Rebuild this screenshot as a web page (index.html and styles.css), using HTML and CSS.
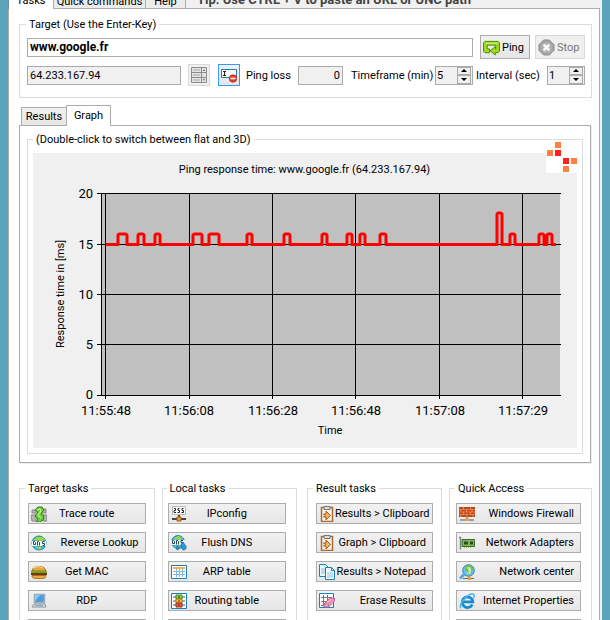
FILE: index.html
```html
<!DOCTYPE html>
<html lang="en">
<head>
<meta charset="utf-8">
<title>Ping response time</title>
<link rel="stylesheet" href="styles.css">
</head>
<body>
<main class="window">
  <nav class="main-tabs">
    <button class="main-tab selected">Tasks</button>
    <button class="main-tab">Quick commands</button>
    <button class="main-tab">Help</button>
    <strong class="tip">Tip: Use CTRL + V to paste an URL or UNC path</strong>
  </nav>
  <div class="page">
    <fieldset class="group target">
      <legend>Target (Use the Enter-Key)</legend>
      <div class="host-row">
        <input class="box host" type="text" value="www.google.fr" aria-label="Target">
        <button class="button action">
          <svg class="icon large" viewBox="0 0 18 18"><path d="M2 2.500h14l1.500 1.500v9L16 14.500h-3V17l-5.500-4.500L13 8v2.500h.500V6.500h-9v4H7v4H2L.5 13V4z" fill="#9fd821" stroke="#4c860d" stroke-linejoin="round"/><path d="M2.500 4.500h13" stroke="#d8f58a"/></svg>
          Ping</button>
        <button class="button action" disabled>
          <svg class="icon large" viewBox="0 0 18 18"><path d="M6 1h6l5 5v6l-5 5H6l-5-5V6z" fill="#a4a4a4" stroke="#8d8d8d"/><circle cx="9" cy="9" r="5.500" fill="#b4b4b4"/><path d="M6 6l6 6M12 6l-6 6" stroke="#fff" stroke-width="2.500"/></svg>
          Stop</button>
      </div>
      <div class="options-row">
        <input class="box address" type="text" value="64.233.167.94" readonly aria-label="IP address">
        <button class="button square" disabled aria-label="Address list">
          <svg class="icon" viewBox="0 0 16 16"><path d="M.5.5h15v15H.5zM.5 5.500h15M.5 10.500h15M10.500.5v15" fill="#e4e4e4" stroke="#8b8b8b"/><path d="M2 3h7M2 8h7M2 13h7" stroke="#a8a8a8"/><path d="M12 4l1-2 1 2zM12 12l1 2 1-2z" fill="#666"/></svg>
        </button>
        <button class="button square checked" aria-label="Clear input">
          <svg class="icon" viewBox="0 0 16 16"><path d="M.5 2.500h15v8H.5z" fill="#fff" stroke="#1680bf"/><path d="M2 4.500h3M3.500 4.500v4M2 8.500h3" stroke="#222" fill="none"/><circle cx="12" cy="11.500" r="3.800" fill="#e23a25" stroke="#b92515" stroke-width=".6"/><path d="M9.500 11.500h5" stroke="#fff" stroke-width="1.600"/></svg>
        </button>
        <label for="loss">Ping loss</label>
        <input class="box loss" id="loss" type="text" value="0" readonly>
        <label for="frame">Timeframe (min)</label>
        <span class="spinner"><input id="frame" type="text" value="5"><span class="steps"><button aria-label="More minutes"><i class="up"></i></button><button aria-label="Fewer minutes"><i class="down"></i></button></span></span>
        <label for="interval">Interval (sec)</label>
        <span class="spinner"><input id="interval" type="text" value="1"><span class="steps"><button aria-label="More seconds"><i class="up"></i></button><button aria-label="Fewer seconds"><i class="down"></i></button></span></span>
      </div>
    </fieldset>

    <nav class="view-tabs">
      <button class="view-tab">Results</button>
      <button class="view-tab selected">Graph</button>
    </nav>
    <section class="pane">
      <fieldset class="group graph">
        <legend>(Double-click to switch between flat and 3D)</legend>
        <svg class="chart" viewBox="33 153 544 295" role="img" aria-label="Ping response time">
          <path d="M102 194h458v201H102z" fill="#c0c0c0"/>
          <path class="grid" d="M97 193.500h464M97 244.500h464M97 294.500h464M97 344.500h464M97 395.500h464M101.500 193v203M105.500 193v206M189.500 193v206M272.500 193v206M355.500 193v206M439.500 193v206M522.500 193v206"/>
          <path class="series" d="M106 244.500H118V235l1-1h7l1 1v9.500H138V235l1-1h4l1 1v9.500H155V235l1-1h3l1 1v9.500H193V235l1-1h7l1 1v9.500H209V235l1-1h8l1 1v9.500H247V235l1-1h3l1 1v9.500H284V235l1-1h4l1 1v9.500H322V235l1-1h3l1 1v9.500H347V235l1-1h3l1 1v9.500H360V235l1-1h3l1 1v9.500H380V235l1-1h4l1 1v9.500H497V214l1-1h3l1 1v30.500H510V235l1-1h3l1 1v9.500H539V235l1-1h3l1 1v9.500H547V235l1-1h3l1 1v9.500H556"/>
          <g class="caption">
            <text x="304.500" y="173">Ping response time: www.google.fr (64.233.167.94)</text>
            <text x="330" y="434">Time</text>
            <text x="-294" y="64" transform="rotate(-90)">Response time in [ms]</text>
          </g>
          <g class="scale values">
            <text x="93" y="198">20</text><text x="93" y="249">15</text><text x="93" y="299">10</text><text x="93" y="349">5</text><text x="93" y="399">0</text>
          </g>
          <g class="scale times">
            <text x="106" y="415">11:55:48</text><text x="189" y="415">11:56:08</text><text x="273" y="415">11:56:28</text><text x="356" y="415">11:56:48</text><text x="440" y="415">11:57:08</text><text x="523" y="415">11:57:29</text>
          </g>
        </svg>
        <svg class="badge" viewBox="0 0 31 31"><path fill="#fff" d="M0 0h31v31H0z"/><path fill="#ff8040" d="M9 0h6v6H9zM1 8h6v6H1zM25 16h6v6h-6zM17 24h6v6h-6z"/><path fill="#ff2020" d="M9 8h6v6H9zM17 16h6v6h-6z"/></svg>
      </fieldset>
    </section>

    <div class="tasks">
      <div class="pair">
        <fieldset class="group task">
          <legend>Target tasks</legend>
          <button class="button"><svg class="icon" viewBox="0 0 16 16"><path d="M1 4h4v3H1zM0 9h5v6H1zM11 3h4v4h-4zM11 9h5v6h-4z" fill="#b5b5b5" stroke="#888"/><path d="M4 4l3-3h4l2 3-3 4 3 2-1 4-3 2H5l2-3-3-3 3-4z" fill="#6ed13b" stroke="#288018"/><path d="M6 4l3-1 1 2-3 4 3 3" stroke="#d5f7a0" fill="none"/></svg><span>Trace route</span></button>
          <button class="button right"><svg class="icon" viewBox="0 0 16 16"><circle cx="8" cy="8" r="7" fill="#45ade0" stroke="#1686bf"/><path d="M2 5l4-3 6 0 2 3-3 1zM4 12l7 0-2 3z" fill="#9cd63b"/><path d="M1 6h14v5H1z" fill="#e9f7fb"/><path d="M2.500 6.500h1l1 1v2h-2zM6.500 10.500v-4h1l1 1v3M13.500 6.500h-2v2h2v2h-2" stroke="#234a62" fill="none"/></svg><span>Reverse Lookup</span></button>
          <button class="button"><svg class="icon" viewBox="0 0 16 16"><path d="M1 7c0-6 14-6 14 0z" fill="#e8a53a" stroke="#ad6b17"/><path d="M3 4q5-3 9 0" stroke="#ffe09a" fill="none"/><path d="M0 8h16" stroke="#69a82b" stroke-width="2"/><path d="M0 10h16" stroke="#743713" stroke-width="2"/><path d="M1 11.500h14c0 3-2 3-7 3s-7 0-7-3z" fill="#e9aa40" stroke="#ad6b17"/></svg><span>Get MAC</span></button>
          <button class="button"><svg class="icon" viewBox="0 0 16 16"><path d="M3.500 1.500h10v8h-10z" fill="#4a9de0" stroke="#9cadb9" stroke-width="1.500"/><path d="M4 2h5L4 8z" fill="#8cccf5"/><path d="M3 11h11l1 3H1z" fill="#e4e9ed" stroke="#7e929f"/><path d="M4 12.500h8" stroke="#91a3ae"/></svg><span>RDP</span></button>
          <button class="button"></button>
        </fieldset>
        <fieldset class="group task local">
          <legend>Local tasks</legend>
          <button class="button"><svg class="icon" viewBox="0 0 16 16"><path d="M1.500.5h13v8h-13z" fill="#fff" stroke="#bbb"/><path d="M3 2.500h1.500v2H3v2h2M8.500 2.500H7v2h1.500v2H6.500M12.500 2.500H11v2h1.500v2h-2" stroke="#222" fill="none"/><path d="M8 9v3M1 13h14" stroke="#444" stroke-width="2"/><path d="M6 11h4v4H6z" fill="#ef9b34" stroke="#9b5b14"/></svg><span>IPconfig</span></button>
          <button class="button"><svg class="icon" viewBox="0 0 16 16"><circle cx="7" cy="7" r="6.500" fill="#4ab0df" stroke="#1689bd"/><path d="M2 4l5-3 5 2-3 2zM3 11h5l-1 2z" fill="#9ad843"/><path d="M0 5h14v5H0z" fill="#e7f5f8"/><path d="M1.500 5.500h1l1 1v2h-2zM5.500 9.500v-4h1l1 1v3M12 5.500h-2v2h2v2h-2" stroke="#244457" fill="none"/><path d="M10 10c0-2 2-2 2-3l3 4c1 4-3 5-4 3zM5 12l2-1 1 3-2 1z" fill="#3695cc" stroke="#1770a2" stroke-width=".7"/></svg><span>Flush DNS</span></button>
          <button class="button"><svg class="icon" viewBox="0 0 16 16"><path d="M.5 1.500h15v13H.5z" fill="#fff" stroke="#1781bf"/><path d="M2 4h12" stroke="#f3b642" stroke-width="2"/><path d="M2 7.500h12M2 10.500h12M5.500 5v8M8.500 5v8M11.500 5v8" stroke="#80b8da"/></svg><span>ARP table</span></button>
          <button class="button"><svg class="icon" viewBox="0 0 16 16"><path d="M.5.5h15v15H.5z" fill="#fff" stroke="#1781bf"/><path d="M2 4h12M2 8h12M2 12h12" stroke="#555"/><path d="M5 2h6v4H5z" fill="#8ed239" stroke="#37881f"/><path d="M5 6h6v4H5z" fill="#ffc432" stroke="#aa7417"/><path d="M5 10h6v4H5z" fill="#ec6541" stroke="#9b2c1b"/><path d="M7 4h2M7 8h2M7 12h2" stroke="#333"/></svg><span>Routing table</span></button>
          <button class="button"></button>
        </fieldset>
      </div>
      <div class="pair">
        <fieldset class="group task">
          <legend>Result tasks</legend>
          <button class="button right"><svg class="icon" viewBox="0 0 16 16"><path d="M2.500 1.500h11v14h-11z" fill="#f8f3ea" stroke="#a46b35" stroke-width="1.500"/><path d="M5 .5h6v3H5z" fill="#ddd" stroke="#777"/><path d="M4.500 8H7V5l4.500 4.500L7 14v-3H4.500l1.500-1.500z" fill="#f2b15a" stroke="#9c5b22"/></svg><span>Results &gt; Clipboard</span></button>
          <button class="button right"><svg class="icon" viewBox="0 0 16 16"><path d="M2.500 1.500h11v14h-11z" fill="#f8f3ea" stroke="#a46b35" stroke-width="1.500"/><path d="M5 .5h6v3H5z" fill="#ddd" stroke="#777"/><path d="M4.500 8H7V5l4.500 4.500L7 14v-3H4.500l1.500-1.500z" fill="#f2b15a" stroke="#9c5b22"/></svg><span>Graph &gt; Clipboard</span></button>
          <button class="button right"><svg class="icon" viewBox="0 0 16 16"><path d="M.5.5h6l3 3v9h-9z" fill="#eaf7ff" stroke="#1781bf"/><path d="M2 5h4M2 7h4M2 9h4" stroke="#8cc4e3"/><path d="M6.500 3.500h6l3 3v9h-9z" fill="#f3fbff" stroke="#1781bf"/><path d="M12.500 3.500v3h3" fill="none" stroke="#1781bf"/><path d="M8 9h6M8 11h6M8 13h6" stroke="#8cc4e3"/></svg><span>Results &gt; Notepad</span></button>
          <button class="button right"><svg class="icon" viewBox="0 0 16 16"><path d="M.5.5h14v14H.5z" fill="#fff" stroke="#1781bf"/><path d="M2 4.500h11M2 8.500h9M2 12.500h6M4.500 2v11M8.500 2v11" stroke="#777"/><path d="M5 11l6-6h4.500v3l-6 6H5z" fill="#f4a6c4" stroke="#be6088"/><path d="M5 11h4.500l6-6M9.500 11v3" fill="none" stroke="#be6088" stroke-width=".7"/></svg><span>Erase Results</span></button>
        </fieldset>
        <fieldset class="group task quick">
          <legend>Quick Access</legend>
          <button class="button right"><svg class="icon" viewBox="0 0 16 16"><path d="M0 1h16v10H0z" fill="#c0441b"/><path d="M0 3.500h16M0 6h16M0 8.500h16M4.500 1v2.500M11.500 1v2.500M7.500 3.500V6M2 3.500V6M13 3.500V6M4.500 6v2.500M11.500 6v2.500M8 8.500V11M2 8.500V11M14 8.500V11" stroke="#f0b070" stroke-width=".6"/><path d="M8 11v3M1 14h14" stroke="#555"/><path d="M6 12h4v3H6z" fill="#e7a54b"/></svg><span>Windows Firewall</span></button>
          <button class="button right"><svg class="icon" viewBox="0 0 16 16"><path d="M0 2.500h1.500v12" stroke="#888" fill="none" stroke-width="1.500"/><path d="M3 4.500h12.500v7H3z" fill="#7ab862" stroke="#376f27"/><path d="M5 6.500h4v3H5zM11 6.500h3v3h-3z" fill="#31472c"/><path d="M5 12.500h8" stroke="#d3a936" stroke-dasharray="1 1"/></svg><span>Network Adapters</span></button>
          <button class="button right"><svg class="icon" viewBox="0 0 16 16"><circle cx="9.500" cy="6.500" r="5.800" fill="#64bfe9" stroke="#2f86b7"/><path d="M7 2l4-1 4 4-3 1 1 3-4 2V8L6 6z" fill="#79bd35"/><path d="M8 4h3v2H9h2v3H8" stroke="#eafbff" stroke-width="1.200" fill="none"/><path d="M5.500 10L1 14.500" stroke="#5ba8d4" stroke-width="3"/><path d="M4 14.500h11" stroke="#666"/><path d="M9 13h3v3H9z" fill="#ef9b34"/></svg><span>Network center</span></button>
          <button class="button right"><svg class="icon" viewBox="0 0 16 16"><path d="M13.300 11.500A5.300 5.300 0 1 1 13.800 8.800H4.500" fill="none" stroke="#168bd1" stroke-width="2.800"/><path d="M2 15C-1 12 9-1 14.500 1.200c1.500 1 .5 3-.5 4" fill="none" stroke="#53b5ea" stroke-width="1.500"/></svg><span>Internet Properties</span></button>
          <button class="button"></button>
        </fieldset>
      </div>
    </div>
  </div>
</main>
</body>
</html>
```
FILE: styles.css
```css
* {
  box-sizing: border-box;
}

body {
  margin: 0;
  background: #fff;
  color: #000;
  font: 11px/13px Roboto, "Liberation Sans", sans-serif;
}

button,
input {
  font: inherit;
  color: inherit;
  margin: 0;
}

svg {
  display: block;
}

.window {
  display: flex;
  flex-direction: column;
  height: 100vh;
  overflow: hidden;
  border: solid #5ba2bb;
  border-width: 0 8px;
  background: #f0f0f0;
}

.main-tabs {
  display: flex;
  flex: none;
  align-items: flex-end;
  height: 9px;
  overflow: hidden;
  border-left: 1px solid #6f8f9b;
}

.main-tab {
  flex: none;
  height: 16px;
  padding: 0;
  width: 92px;
  border: 1px solid #acacac;
  border-left: 0;
  background: #ececec;
  white-space: nowrap;
}

.main-tab:nth-child(3) {
  width: 40px;
}

.main-tab.selected {
  width: 45px;
  padding: 0 0 2px;
  border-bottom: 0;
  background: #fff;
}

.tip {
  flex: 1;
  height: 16px;
  padding: 0 0 0 11px;
  border-bottom: 1px solid #acacac;
  margin-right: 2px;
  color: #444;
  font-size: 13px;
  white-space: nowrap;
}

.page {
  flex: 1;
  min-height: 0;
  margin-right: 2px;
  padding: 9px 7px 0 10px;
  border: solid #acacac;
  border-width: 0 1px;
  background: #fff;
}

.group {
  min-width: 0;
  margin: 0;
  border: 1px solid #dcdcdc;
}

legend {
  margin-left: -1px;
  padding: 0 3px;
}

.target {
  padding: 4px 6px 11px 7px;
}

.host-row {
  display: flex;
  align-items: center;
  gap: 5px;
}

.box {
  height: 19px;
  min-width: 0;
  padding: 0 2px;
  border: 1px solid #ababab;
  background: #fff;
}

.box[readonly] {
  background: #f0f0f0;
}

.host {
  flex: 1;
  margin-right: 2px;
  font-size: 12px;
  font-weight: bold;
}

.button {
  display: flex;
  align-items: center;
  border: 1px solid #acacac;
  background: linear-gradient(#f1f1f1, #e6e6e6);
  white-space: nowrap;
}

.button:disabled {
  border-color: #d9d9d9;
  background: #f0f0f0;
  color: #777;
}

.action {
  width: 50px;
  height: 24px;
  padding: 0 0 0 2px;
  gap: 2px;
}

.icon {
  flex: none;
  width: 16px;
  height: 16px;
}

.icon.large {
  width: 17px;
  height: 17px;
}

.options-row {
  display: grid;
  grid-template-columns: 1fr 30px 28px 52px 53px 84px 41px 71px 38px;
  align-items: center;
  margin-top: 5px;
  white-space: nowrap;
}

.address {
  margin-right: 7px;
}

.square {
  width: 22px;
  height: 22px;
  padding: 0;
  justify-content: center;
}

.checked {
  border-color: #3399ff;
}

.loss {
  width: 45px;
  text-align: right;
}

.spinner {
  display: flex;
  width: 38px;
  height: 19px;
  border: 1px solid #ababab;
  background: #f0f0f0;
}

.spinner input {
  flex: 1;
  min-width: 0;
  padding: 0 1px;
  border: 0;
  background: none;
}

.steps {
  display: flex;
  flex-direction: column;
  width: 15px;
  padding-right: 1px;
}

.steps button {
  display: flex;
  flex: 1;
  align-items: center;
  justify-content: center;
  padding: 0;
  border: 1px solid #acacac;
  background: #f0f0f0;
}

.up,
.down {
  border: solid transparent;
  border-width: 0 3px;
}

.up {
  border-bottom: 3px solid #000;
}

.down {
  border-top: 3px solid #000;
}

.view-tabs {
  display: flex;
  align-items: flex-end;
  margin: 7px 0 -1px 2px;
}

.view-tab {
  position: relative;
  width: 45px;
  height: 19px;
  padding: 0;
  border: 1px solid #acacac;
  border-right: 0;
  background: linear-gradient(#f1f1f1, #e6e6e6);
}

.view-tab.selected {
  height: 21px;
  padding-bottom: 1px;
  border-right: 1px solid #acacac;
  border-bottom: 0;
  background: #fff;
}

.pane {
  margin-right: 1px;
  padding: 7px 7px 8px;
  border: 1px solid #acacac;
  box-shadow: 1px 1px 0 #eee;
}

.graph {
  position: relative;
  padding: 7px 5px 5px;
}

.graph legend {
  margin-left: 0;
}

.chart {
  width: 100%;
  background: #f0f0f0;
}

.badge {
  position: absolute;
  top: -4px;
  right: 5px;
  width: 31px;
  height: 31px;
}

.grid {
  fill: none;
  stroke: #000;
  shape-rendering: crispEdges;
}

.series {
  fill: none;
  stroke: #f00;
  stroke-width: 3;
  stroke-linejoin: round;
}

.caption {
  text-anchor: middle;
}

.scale {
  font-size: 13px;
}

.values {
  text-anchor: end;
}

.times {
  text-anchor: middle;
}

.tasks {
  display: flex;
  gap: 10px;
  margin-top: 19px;
}

.pair {
  display: grid;
  flex: 278;
  grid-template-columns: 1fr 1fr;
  gap: 7px;
}

.pair:last-child {
  flex: 285;
  grid-template-columns: 135fr 143fr;
}

.task {
  padding: 8px 8px 0;
}

.local {
  padding: 8px 10px 0 5px;
}

.quick {
  padding: 8px 10px 0 6px;
}

.task legend {
  margin-left: -3px;
}

.local legend,
.quick legend {
  margin-left: -1px;
}

.task .button {
  width: 100%;
  height: 21px;
  margin-bottom: 8px;
  padding: 0 18px 0 2px;
}

.task .button span {
  flex: 1;
  text-align: center;
}

.task .button.right {
  padding-right: 6px;
}

.task .button.right span {
  text-align: right;
}
```
